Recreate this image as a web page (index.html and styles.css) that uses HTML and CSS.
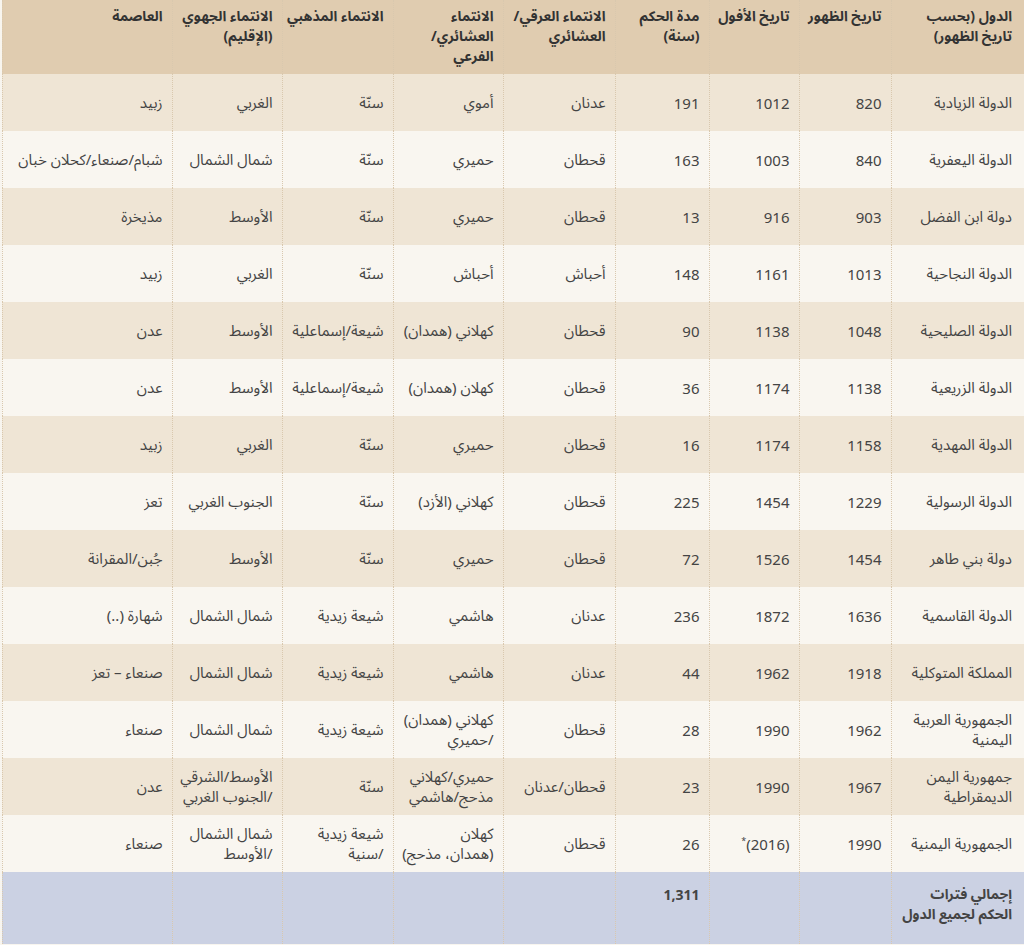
FILE: index.html
```html
<!DOCTYPE html>
<html lang="ar" dir="rtl">
<head>
<meta charset="utf-8">
<title>الدول اليمنية</title>
<link rel="stylesheet" href="styles.css">
</head>
<body>
<div class="wrap">
<table class="states">
<colgroup>
<col class="c1"><col class="c2"><col class="c3"><col class="c4"><col class="c5"><col class="c6"><col class="c7"><col class="c8"><col class="c9">
</colgroup>
<thead>
<tr>
<th class="first">الدول (بحسب<br>تاريخ الظهور)</th>
<th>تاريخ الظهور</th>
<th>تاريخ الأفول</th>
<th>مدة الحكم<br>(سنة)</th>
<th>الانتماء العرقي/<br>العشائري</th>
<th>الانتماء<br>العشائري/<br>الفرعي</th>
<th>الانتماء المذهبي</th>
<th>الانتماء الجهوي<br>(الإقليم)</th>
<th>العاصمة</th>
</tr>
</thead>
<tbody>
<tr><td class="first">الدولة الزيادية</td><td class="num">820</td><td class="num">1012</td><td class="num">191</td><td>عدنان</td><td>أموي</td><td>سنّة</td><td>الغربي</td><td>زبيد</td></tr>
<tr><td class="first">الدولة اليعفرية</td><td class="num">840</td><td class="num">1003</td><td class="num">163</td><td>قحطان</td><td>حميري</td><td>سنّة</td><td>شمال الشمال</td><td>شبام/صنعاء/كحلان خبان</td></tr>
<tr><td class="first">دولة ابن الفضل</td><td class="num">903</td><td class="num">916</td><td class="num">13</td><td>قحطان</td><td>حميري</td><td>سنّة</td><td>الأوسط</td><td>مذيخرة</td></tr>
<tr><td class="first">الدولة النجاحية</td><td class="num">1013</td><td class="num">1161</td><td class="num">148</td><td>أحباش</td><td>أحباش</td><td>سنّة</td><td>الغربي</td><td>زبيد</td></tr>
<tr><td class="first">الدولة الصليحية</td><td class="num">1048</td><td class="num">1138</td><td class="num">90</td><td>قحطان</td><td>كهلاني (همدان)</td><td>شيعة/إسماعلية</td><td>الأوسط</td><td>عدن</td></tr>
<tr><td class="first">الدولة الزريعية</td><td class="num">1138</td><td class="num">1174</td><td class="num">36</td><td>قحطان</td><td>كهلان (همدان)</td><td>شيعة/إسماعلية</td><td>الأوسط</td><td>عدن</td></tr>
<tr><td class="first">الدولة المهدية</td><td class="num">1158</td><td class="num">1174</td><td class="num">16</td><td>قحطان</td><td>حميري</td><td>سنّة</td><td>الغربي</td><td>زبيد</td></tr>
<tr><td class="first">الدولة الرسولية</td><td class="num">1229</td><td class="num">1454</td><td class="num">225</td><td>قحطان</td><td>كهلاني (الأزد)</td><td>سنّة</td><td>الجنوب الغربي</td><td>تعز</td></tr>
<tr><td class="first">دولة بني طاهر</td><td class="num">1454</td><td class="num">1526</td><td class="num">72</td><td>قحطان</td><td>حميري</td><td>سنّة</td><td>الأوسط</td><td>جُبن/المقرانة</td></tr>
<tr><td class="first">الدولة القاسمية</td><td class="num">1636</td><td class="num">1872</td><td class="num">236</td><td>عدنان</td><td>هاشمي</td><td>شيعة زيدية</td><td>شمال الشمال</td><td>شهارة (..)</td></tr>
<tr><td class="first">المملكة المتوكلية</td><td class="num">1918</td><td class="num">1962</td><td class="num">44</td><td>عدنان</td><td>هاشمي</td><td>شيعة زيدية</td><td>شمال الشمال</td><td>صنعاء – تعز</td></tr>
<tr><td class="first">الجمهورية العربية<br>اليمنية</td><td class="num">1962</td><td class="num">1990</td><td class="num">28</td><td>قحطان</td><td>كهلاني (همدان)<br>/حميري</td><td>شيعة زيدية</td><td>شمال الشمال</td><td>صنعاء</td></tr>
<tr><td class="first">جمهورية اليمن<br>الديمقراطية</td><td class="num">1967</td><td class="num">1990</td><td class="num">23</td><td>قحطان/عدنان</td><td>حميري/كهلاني<br>مذحج/هاشمي</td><td>سنّة</td><td>الأوسط/الشرقي<br>/الجنوب الغربي</td><td>عدن</td></tr>
<tr><td class="first">الجمهورية اليمنية</td><td class="num">1990</td><td class="num">(2016)<sup class="star">*</sup></td><td class="num">26</td><td>قحطان</td><td>كهلان<br>(همدان، مذحج)</td><td>شيعة زيدية<br>/سنية</td><td>شمال الشمال<br>/الأوسط</td><td>صنعاء</td></tr>
</tbody>
<tfoot>
<tr><td class="first">إجمالي فترات<br>الحكم لجميع الدول</td><td></td><td></td><td class="num">1,311</td><td></td><td></td><td></td><td></td><td></td></tr>
</tfoot>
</table>
</div>
</body>
</html>
```
FILE: styles.css
```css
html, body {
  margin: 0;
  padding: 0;
}
body {
  background: #f8f5ef;
  direction: rtl;
  font-family: "Noto Sans Arabic", "Noto Sans", "DejaVu Sans", sans-serif;
  color: #444;
}
.wrap {
  display: flex;
  justify-content: flex-start;
}
.states {
  width: 1022px;
  border-collapse: collapse;
  table-layout: fixed;
}
.c1 { width: 133px; }
.c2 { width: 92px; }
.c3 { width: 90px; }
.c4 { width: 94px; }
.c5 { width: 112px; }
.c6 { width: 110px; }
.c7 { width: 111px; }
.c8 { width: 110px; }
.c9 { width: 170px; }

.states th,
.states td {
  text-align: right;
  padding: 0 9px 0 2px;
  border-left: 1px dotted #d9c8ae;
  line-height: 20px;
}
.states th {
  background: #e0ccb0;
  color: #333;
  font-size: 14px;
  font-weight: bold;
  vertical-align: top;
  padding-top: 7px;
  white-space: nowrap;
}
.states thead tr { height: 74px; }
.states tbody tr { height: 57px; }
.states td {
  font-size: 15px;
  vertical-align: middle;
}
.states tbody tr:nth-child(odd) td { background: #efe5d5; }
.states tbody tr:nth-child(even) td { background: #f9f6f0; }
.states .first { padding-right: 12px; }
.states .num { font-family: "Noto Sans", "Open Sans", sans-serif; }
.star {
  font-size: 9px;
  line-height: 0;
  vertical-align: 6px;
}
.states tfoot tr { height: 72px; }
.states tfoot td {
  background: #cbd1e3;
  vertical-align: top;
  padding-top: 13px;
  font-weight: bold;
  font-size: 14px;
  color: #444;
}
```
